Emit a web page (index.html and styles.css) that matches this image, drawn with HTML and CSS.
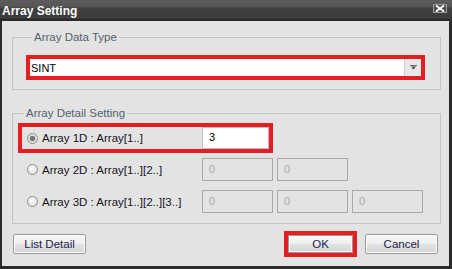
FILE: index.html
```html
<!DOCTYPE html>
<html lang="en">
  <head>
    <meta charset="UTF-8" />
    <title>Array Setting</title>
    <link rel="stylesheet" href="styles.css">
  </head>
  <body>
    <div class="window">
      <div class="titlebar">
        <span class="title">Array Setting</span>
        <span class="close-btn">
          <svg width="10" height="7" viewBox="0 0 10 7">
            <path d="M1 0.5 L9 6.5 M9 0.5 L1 6.5" stroke="#ffffff" stroke-width="1.8" />
          </svg>
        </span>
      </div>

      <div class="panel">
        <fieldset class="group group-type">
          <legend>Array Data Type</legend>
          <div class="mark">
            <div class="combo">
              <span class="combo-value">SINT</span>
              <span class="combo-btn">
                <svg width="7" height="5" viewBox="0 0 7 5">
                  <path d="M0 0.5 H7" stroke="#6a6a6a" stroke-width="1" />
                  <path d="M1 1.5 H6 L3.5 4.5 Z" fill="#4a4a4a" />
                </svg>
              </span>
            </div>
          </div>
        </fieldset>

        <fieldset class="group group-detail">
          <legend>Array Detail Setting</legend>

          <div class="dim-row mark">
            <label class="dim-label">
              <input type="radio" name="dim" class="radio" checked />
              Array 1D : Array[1..]
            </label>
            <input type="text" class="num-input active" value="3" />
          </div>

          <div class="dim-row">
            <label class="dim-label">
              <input type="radio" name="dim" class="radio" />
              Array 2D : Array[1..][2..]
            </label>
            <input type="text" class="num-input" value="0" disabled />
            <input type="text" class="num-input" value="0" disabled />
          </div>

          <div class="dim-row">
            <label class="dim-label">
              <input type="radio" name="dim" class="radio" />
              Array 3D : Array[1..][2..][3..]
            </label>
            <input type="text" class="num-input" value="0" disabled />
            <input type="text" class="num-input" value="0" disabled />
            <input type="text" class="num-input" value="0" disabled />
          </div>
        </fieldset>

        <div class="footer">
          <button class="btn">List Detail</button>
          <div class="footer-right">
            <div class="mark">
              <button class="btn btn-ok">OK</button>
            </div>
            <button class="btn">Cancel</button>
          </div>
        </div>
      </div>
    </div>
  </body>
</html>
```

FILE: styles.css
```css
/* Array Setting dialog */
body {
  margin: 0;
  padding: 0;
  font-family: "Liberation Sans", Arial, sans-serif;
  font-size: 11px;
  background-color: #2e2e2e;
}

.window {
  width: 452px;
  height: 269px;
  display: flex;
  flex-direction: column;
  background-color: #2c2c2c;
}

.titlebar {
  height: 20px;
  display: flex;
  justify-content: space-between;
  align-items: flex-start;
  background: linear-gradient(#5c5c5c 0, #565656 7px, #3f3f3f 8px, #3b3b3b 19px, #262626 19px);
}

.title {
  padding-left: 2px;
  padding-top: 5px;
  font-size: 12px;
  line-height: 13px;
  font-weight: bold;
  color: #ffffff;
}

.close-btn {
  margin: 4px 5px 0 0;
  width: 12px;
  height: 7px;
  display: flex;
  align-items: center;
  justify-content: center;
  border: 1px solid #9a9a9a;
  background-color: #4e4e4e;
}

.close-btn svg {
  display: block;
}

.panel {
  flex: 1;
  margin: 1px 3px 3px 2px;
  background-color: #e3e3e3;
  display: flex;
  flex-direction: column;
}

.group {
  margin: 0 8px 0 10px;
  padding: 0;
  border: 1px solid #c4c4c4;
  min-width: 0;
}

.group legend {
  margin-left: 6px;
  padding: 0 2px;
  font-size: 11.5px;
  line-height: 14px;
  color: #56606e;
}

.group-type {
  margin-top: 9px;
  padding: 11px 15px 9px 13px;
}

.group-detail {
  margin-top: 16px;
  padding: 3px 0 6px 5px;
  display: flex;
  flex-direction: column;
  gap: 1px;
}

/* red highlight rectangle */
.mark {
  border: 4px solid #e61e24;
}

.combo {
  height: 17px;
  display: flex;
  background-color: #ffffff;
}

.combo-value {
  flex: 1;
  padding-left: 1px;
  line-height: 18px;
  color: #000000;
}

.combo-btn {
  width: 16px;
  display: flex;
  align-items: center;
  justify-content: center;
  background-color: #e8e8e8;
  border-left: 1px solid #cdcdcd;
}

.dim-row {
  display: flex;
  align-items: center;
  height: 23px;
  border: 4px solid transparent;
  padding-left: 5px;
}

.dim-row.mark {
  width: 242px;
  height: 22px;
  border-color: #e61e24;
}

.dim-label {
  width: 175px;
  display: flex;
  align-items: center;
  gap: 4px;
  font-size: 11.5px;
  color: #14141e;
  white-space: nowrap;
}

.radio {
  appearance: none;
  margin: 0;
  width: 11px;
  height: 11px;
  border: 1px solid #8e8e8e;
  border-radius: 50%;
  background: radial-gradient(circle at 40% 40%, #ffffff 0, #e6e6e6 60%, #d0d0d0 100%);
}

.radio:checked {
  background: radial-gradient(circle, #6e6e6e 0, #7a7a7a 2.5px, #d8d8d8 3px, #eeeeee 100%);
}

.num-input {
  box-sizing: border-box;
  width: 71px;
  height: 23px;
  margin: 0;
  padding: 0 0 2px 6px;
  border: 1px solid #a9a9a9;
  background-color: transparent;
  font-family: "Liberation Sans", Arial, sans-serif;
  font-size: 11px;
  color: #a8a8a8;
}

.num-input + .num-input {
  margin-left: 4px;
}

.num-input.active {
  width: 67px;
  height: 22px;
  background-color: #ffffff;
  border-color: #c0c0c0;
  color: #000000;
}

.footer {
  margin-top: 7px;
  padding: 0 11px 0 11px;
  display: flex;
  justify-content: space-between;
  align-items: center;
}

.footer-right {
  display: flex;
  align-items: center;
  gap: 8px;
}

.btn {
  box-sizing: border-box;
  width: 73px;
  height: 20px;
  margin: 0;
  padding: 0;
  border: 1px solid #9a9a9a;
  border-radius: 2px;
  background: linear-gradient(#f8f8f8, #eeeeee 50%, #e2e2e2 51%, #d6d6d6);
  box-shadow: inset 0 0 0 1px #fbfbfb;
  font-family: "Liberation Sans", Arial, sans-serif;
  font-size: 11.5px;
  color: #1a1a50;
}

.btn-ok {
  display: block;
  width: 65px;
  height: 18px;
  border-radius: 0;
}
```
